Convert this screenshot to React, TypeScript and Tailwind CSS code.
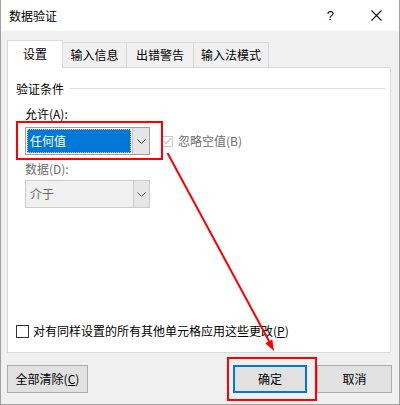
import React from "react";

const font = { fontFamily: '"Noto Sans CJK SC", "Noto Sans", sans-serif' };

function Chevron({ color }: { color: string }) {
  return (
    <svg width="9" height="5" viewBox="0 0 9 5" fill="none">
      <path d="M0.5 0.5 L4.5 4.5 L8.5 0.5" stroke={color} strokeWidth="1" />
    </svg>
  );
}

function Tab({ label, active, width }: { label: string; active?: boolean; width: string }) {
  return (
    <div
      className={`${width} flex items-center justify-center border-[#d9d9d9] ${
        active
          ? "h-[28px] bg-white border border-b-0 relative z-10 -mb-px pb-[1px]"
          : "h-[25px] bg-[#f0f0f0] border-t border-r"
      }`}
    >
      <span className="text-[12px] leading-[16px] text-black">{label}</span>
    </div>
  );
}

function Button({ children, width, primary }: { children: React.ReactNode; width: string; primary?: boolean }) {
  return (
    <div
      className={`${width} h-[28px] flex items-center justify-center bg-[#e1e1e1] text-[12px] leading-[16px] text-black ${
        primary ? "border-2 border-[#0078d7]" : "border border-[#adadad]"
      }`}
    >
      {children}
    </div>
  );
}

export default function App() {
  return (
    <div
      className="relative w-[400px] h-[405px] bg-[#f0f0f0] border-x border-b border-[#a0a0a0] flex flex-col overflow-hidden"
      style={font}
    >
      {/* 标题栏 */}
      <div className="h-[31px] bg-white flex items-center pl-[8px] shrink-0">
        <span className="text-[12px] leading-[16px] text-black">数据验证</span>
        <div className="flex-1" />
        <span className="text-[13px] leading-[16px] text-black mr-[37px]" style={{ fontFamily: '"Liberation Sans", sans-serif' }}>?</span>
        <svg width="11" height="11" viewBox="0 0 11 11" className="mr-[17px]">
          <path d="M0.5 0.5 L10.5 10.5 M10.5 0.5 L0.5 10.5" stroke="#111" strokeWidth="1.1" />
        </svg>
      </div>

      {/* 选项卡 */}
      <div className="pl-[6px] mt-[9px] flex items-end">
        <Tab label="设置" active width="w-[56px]" />
        <Tab label="输入信息" width="w-[64px]" />
        <Tab label="出错警告" width="w-[67px]" />
        <Tab label="输入法模式" width="w-[75px]" />
      </div>

      {/* 面板 */}
      <div className="ml-[6px] w-[384px] h-[286px] bg-white border border-[#d9d9d9] flex flex-col">
        <div className="mt-[13px] h-[16px] flex items-center pl-[8px]">
          <span className="text-[12px] leading-[16px] text-black">验证条件</span>
          <div className="flex-1 h-px bg-[#dcdcdc] ml-[6px] mr-[5px] -mt-[2px]" />
        </div>

        <div className="mt-[9px] pl-[17px] h-[16px] text-[12px] leading-[16px] text-black">允许(A):</div>

        <div className="mt-[5px] pl-[17px] flex items-center">
          <div className="w-[125px] h-[28px] border border-[#a0a0a0] flex bg-white">
            <div className="flex-1 m-[1px] bg-[#0078d7] border border-dotted border-[#f5c26b] flex items-center pl-[2px]">
              <span className="text-[12px] leading-[16px] text-white">任何值</span>
            </div>
            <div className="w-[17px] bg-[#e5e5e5] border-l border-[#c4c4c4] flex items-center justify-center">
              <Chevron color="#333" />
            </div>
          </div>
          <div className="ml-[12px] w-[11px] h-[11px] border border-[#cccccc] flex items-center justify-center">
            <svg width="9" height="8" viewBox="0 0 9 8" fill="none">
              <path d="M0.8 4.2 L3.3 6.6 L8.2 1" stroke="#c6c6c6" strokeWidth="1.2" />
            </svg>
          </div>
          <span className="ml-[5px] text-[12px] leading-[16px] text-[#6d6d6d]">忽略空值(B)</span>
        </div>

        <div className="mt-[6px] pl-[17px] h-[16px] text-[12px] leading-[16px] text-[#6d6d6d]">数据(D):</div>

        <div className="mt-[3px] pl-[17px]">
          <div className="w-[125px] h-[28px] border border-[#cccccc] flex bg-[#f0f0f0]">
            <div className="flex-1 flex items-center pl-[4px]">
              <span className="text-[12px] leading-[16px] text-[#6d6d6d]">介于</span>
            </div>
            <div className="w-[16px] bg-[#e6e6e6] border-l border-[#cccccc] flex items-center justify-center">
              <Chevron color="#606060" />
            </div>
          </div>
        </div>

        <div className="flex-1" />

        <div className="mb-[13px] pl-[8px] h-[16px] flex items-center">
          <div className="w-[13px] h-[13px] border border-[#333] bg-white" />
          <span className="ml-[4px] text-[12px] leading-[16px] text-black">
            对有同样设置的所有其他单元格应用这些更改(<span className="underline">P</span>)
          </span>
        </div>
      </div>

      {/* 底部按钮 */}
      <div className="mt-[12px] pl-[6px] pr-[7px] flex items-center">
        <Button width="w-[81px]">
          全部清除(<span className="underline">C</span>)
        </Button>
        <div className="flex-1" />
        <Button width="w-[74px]" primary>
          确定
        </Button>
        <div className="w-[10px]" />
        <Button width="w-[75px]">取消</Button>
      </div>

      {/* 标注 */}
      <div className="absolute left-[15px] top-[121px] w-[147px] h-[39px] border-2 border-[#ff0000]" />
      <div className="absolute left-[226px] top-[357px] w-[90px] h-[44px] border-2 border-[#ff0000]" />
      <svg className="absolute left-0 top-0" width="400" height="405" viewBox="0 0 400 405">
        <line x1="166.5" y1="153" x2="268.5" y2="342" stroke="#ff0000" strokeWidth="2" />
        <polygon points="273,351 264.3,343.2 271.3,339.4" fill="#ff0000" />
      </svg>
    </div>
  );
}
